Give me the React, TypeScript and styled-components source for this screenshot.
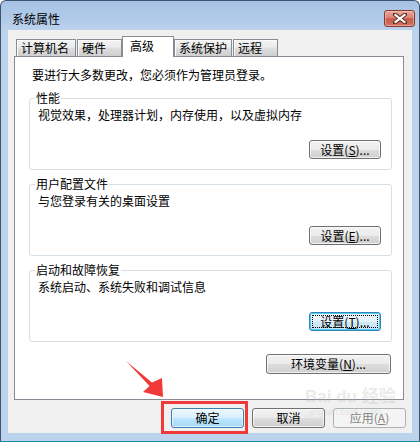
import React from 'react';
import styled, { createGlobalStyle, css } from 'styled-components';

const Global = createGlobalStyle`
  html, body { margin: 0; padding: 0; background: #ffffff; }
  body { font-family: "Noto Sans CJK SC", "Noto Sans", sans-serif; font-size: 12px; color: #000; }
  * { box-sizing: border-box; }
`;

const Window = styled.div`
  position: relative;
  width: 420px;
  height: 442px;
  display: flex;
  flex-direction: column;
  border: 1px solid #3d536e;
  border-bottom-color: #1b8aa3;
  border-radius: 6px 6px 0 0;
  background: linear-gradient(to bottom, #a6c2e3 0px, #b3cbe9 20px, #bcd3ee 30px, #bcd3ee 100%);
  padding: 0 7px 8px;
  overflow: hidden;
`;

const TitleBar = styled.div`
  height: 29px;
  flex: none;
  display: flex;
  align-items: flex-start;
  justify-content: space-between;
  padding-left: 4px;
`;

const Title = styled.div`
  padding-top: 11px;
  line-height: 14px;
  font-size: 12px;
  color: #000;
`;

const CloseButton = styled.div`
  margin-top: 9px;
  margin-right: -3px;
  width: 31px;
  height: 17px;
  border: 1px solid #83392f;
  border-radius: 3px;
  background: linear-gradient(to bottom, #eaa898 0%, #d98372 45%, #c85a48 52%, #d27462 100%);
  box-shadow: inset 0 0 0 1px rgba(255, 220, 210, 0.45);
  display: flex;
  align-items: center;
  justify-content: center;
`;

const Client = styled.div`
  flex: 1;
  background: #f0f0f0;
  display: flex;
  flex-direction: column;
  padding: 6px 8px 0 6px;
`;

const TabStrip = styled.div`
  height: 20px;
  display: flex;
  align-items: flex-end;
  gap: 1px;
  padding-left: 2px;
  position: relative;
  z-index: 2;
`;

const Tab = styled.div<{ $w: number; $active?: boolean }>`
  width: ${(p) => p.$w}px;
  height: 17px;
  border: 1px solid #898c95;
  border-bottom: none;
  padding: 0 0 0 4px;
  line-height: 16px;
  font-size: 12px;
  white-space: nowrap;
  background: linear-gradient(to bottom, #f3f3f3 0%, #ebebeb 45%, #dcdcdc 55%, #cfcfcf 100%);
  box-shadow: inset 1px 1px 0 #fbfbfb;
  ${(p) =>
    p.$active &&
    css`
      height: 21px;
      margin: 0 -1px -1px;
      padding-left: 7px;
      line-height: 17px;
      background: #ffffff;
      box-shadow: none;
    `}
`;

const Panel = styled.div`
  height: 344px;
  background: #ffffff;
  border: 1px solid #898c95;
  display: flex;
  flex-direction: column;
  padding: 11px 11px 0 14px;
`;

const Intro = styled.div`
  line-height: 14px;
  margin-left: 3px;
`;

const Group = styled.div<{ $first?: boolean }>`
  position: relative;
  height: 72px;
  margin-top: ${(p) => (p.$first ? 16 : 14)}px;
  border: 1px solid #d5dfe5;
  border-radius: 3px;
  display: flex;
  flex-direction: column;
  padding: 9px 10px 0 8px;
`;

const Legend = styled.span`
  position: absolute;
  top: -8px;
  left: 5px;
  padding: 0 1px;
  background: #ffffff;
  line-height: 14px;
`;

const Desc = styled.div`
  line-height: 14px;
`;

const Button = styled.div<{ $w: number; $h?: number; $kind?: 'default' | 'primary' | 'focus' | 'disabled' }>`
  width: ${(p) => p.$w}px;
  height: ${(p) => p.$h ?? 19}px;
  border: 1px solid #707070;
  border-radius: 3px;
  background: linear-gradient(to bottom, #f2f2f2 0%, #ebebeb 50%, #dddddd 51%, #cfcfcf 100%);
  box-shadow: inset 0 0 0 1px rgba(255, 255, 255, 0.7);
  display: flex;
  align-items: center;
  justify-content: center;
  font-size: 12px;
  line-height: 14px;
  color: #000;
  white-space: nowrap;
  flex: none;
  ${(p) =>
    p.$kind === 'primary' &&
    css`
      border-color: #3c7fb1;
      background: linear-gradient(to bottom, #eaf6fd 0%, #d9f0fc 50%, #bee6fd 51%, #a7d9f5 100%);
      box-shadow: inset 0 0 0 1px rgba(255, 255, 255, 0.6);
    `}
  ${(p) =>
    p.$kind === 'focus' &&
    css`
      border-color: #3c7fb1;
      background: linear-gradient(to bottom, #eef7fd 0%, #e3f2fb 50%, #d2eaf8 51%, #c4e3f5 100%);
      box-shadow: inset 0 0 0 1px #48d0f8;
      outline: 1px dotted #000;
      outline-offset: -4px;
    `}
  ${(p) =>
    p.$kind === 'disabled' &&
    css`
      border-color: #adb2b5;
      background: #f4f4f4;
      color: #838383;
      box-shadow: none;
    `}
`;

const GroupButton = styled(Button)`
  align-self: flex-end;
  margin-top: 18px;
`;

const EnvRow = styled.div`
  display: flex;
  justify-content: flex-end;
  margin-top: 12px;
  padding-right: 1px;
`;

const FooterRow = styled.div`
  display: flex;
  justify-content: flex-end;
  gap: 8px;
  margin-top: 8px;
  margin-right: -2px;
`;

const Annotation = styled.svg`
  position: absolute;
  left: 0;
  top: 0;
  width: 420px;
  height: 442px;
  pointer-events: none;
  z-index: 5;
`;

const Watermark = styled.div`
  position: absolute;
  left: 304px;
  top: 386px;
  z-index: 4;
  display: flex;
  flex-direction: column;
  align-items: flex-start;
  color: rgba(185, 185, 185, 0.3);
  pointer-events: none;
`;

const WmBig = styled.div`
  font-family: "Liberation Sans", "Noto Sans CJK SC", sans-serif;
  font-size: 17px;
  font-weight: bold;
  line-height: 20px;
`;

const WmSmall = styled.div`
  font-family: "Liberation Sans", sans-serif;
  font-size: 9px;
  line-height: 11px;
  margin-left: 4px;
`;

const CloseIcon = () => (
  <svg width="14" height="11" viewBox="0 0 14 11">
    <path d="M2 1.5 L12 9.5 M12 1.5 L2 9.5" stroke="#5a2a22" strokeWidth="4" strokeLinecap="square" />
    <path d="M2.5 2 L11.5 9 M11.5 2 L2.5 9" stroke="#ffffff" strokeWidth="2.2" strokeLinecap="square" />
  </svg>
);

const tabs: { label: string; w: number; active?: boolean }[] = [
  { label: '计算机名', w: 60 },
  { label: '硬件', w: 45 },
  { label: '高级', w: 52, active: true },
  { label: '系统保护', w: 58 },
  { label: '远程', w: 45 },
];

export default function App() {
  return (
    <>
      <Global />
      <Window>
        <TitleBar>
          <Title>系统属性</Title>
          <CloseButton>
            <CloseIcon />
          </CloseButton>
        </TitleBar>
        <Client>
          <TabStrip>
            {tabs.map((t) => (
              <Tab key={t.label} $w={t.w} $active={t.active}>
                {t.label}
              </Tab>
            ))}
          </TabStrip>
          <Panel>
            <Intro>要进行大多数更改，您必须作为管理员登录。</Intro>
            <Group $first>
              <Legend>性能</Legend>
              <Desc>视觉效果，处理器计划，内存使用，以及虚拟内存</Desc>
              <GroupButton $w={72}>
                设置(<u>S</u>)...
              </GroupButton>
            </Group>
            <Group>
              <Legend>用户配置文件</Legend>
              <Desc>与您登录有关的桌面设置</Desc>
              <GroupButton $w={72}>
                设置(<u>E</u>)...
              </GroupButton>
            </Group>
            <Group>
              <Legend>启动和故障恢复</Legend>
              <Desc>系统启动、系统失败和调试信息</Desc>
              <GroupButton $w={72} $kind="focus">
                设置(<u>T</u>)...
              </GroupButton>
            </Group>
            <EnvRow>
              <Button $w={125} $h={20}>
                环境变量(<u>N</u>)...
              </Button>
            </EnvRow>
          </Panel>
          <FooterRow>
            <Button $w={73} $h={20} $kind="primary">确定</Button>
            <Button $w={73} $h={20}>取消</Button>
            <Button $w={73} $h={20} $kind="disabled">
              应用(<u>A</u>)
            </Button>
          </FooterRow>
        </Client>
        <Watermark>
          <WmBig>Bai du 经验</WmBig>
          <WmSmall>jingyan.baidu.com</WmSmall>
        </Watermark>
        <Annotation viewBox="0 0 420 442">
          <rect x="161.5" y="401.5" width="84" height="30" fill="none" stroke="#f03a3a" strokeWidth="3" />
          <polygon
            points="125,360 151,381.5 161,377 162,396 142,391 148.5,385"
            fill="#f03a3a"
          />
        </Annotation>
      </Window>
    </>
  );
}
